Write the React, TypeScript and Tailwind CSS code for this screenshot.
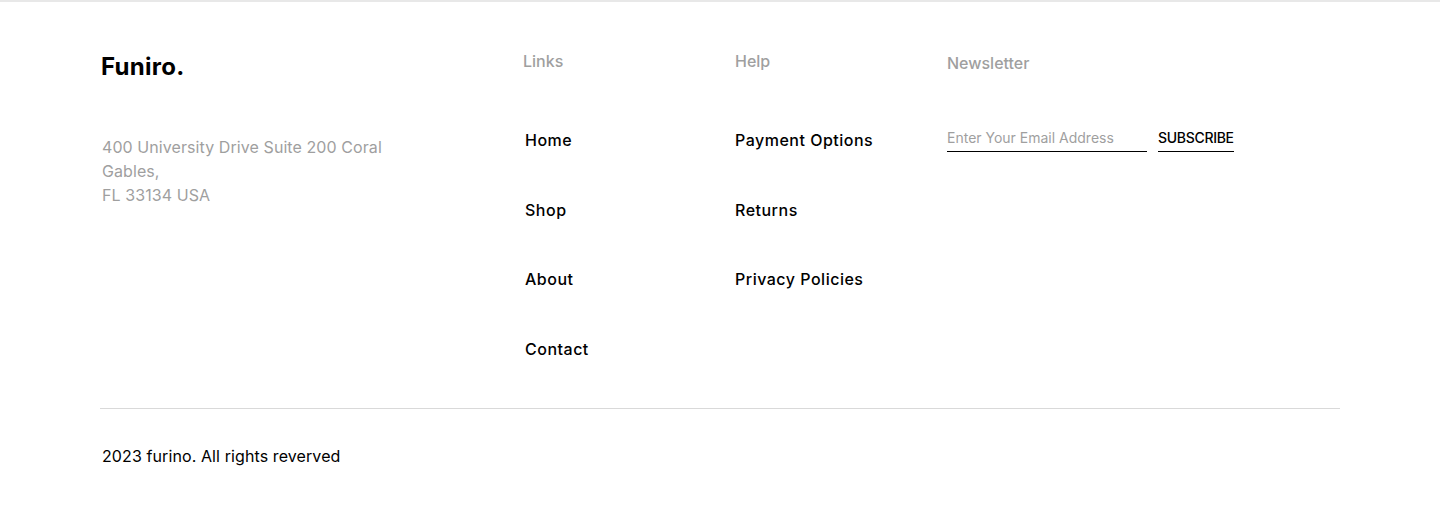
export default function App() {
  const links = ["Home", "Shop", "About", "Contact"];
  const help = ["Payment Options", "Returns", "Privacy Policies"];

  return (
    <footer
      className="w-full bg-white border-t-2 border-[#e8e8e8] text-black"
      style={{ fontFamily: "Inter, 'Open Sans', sans-serif" }}
    >
      <div className="px-[100px] pt-[47px]">
        <div className="flex">
          <div className="w-[423px] shrink-0">
            <h2 className="text-2xl leading-9 font-bold pl-[1px] tracking-[0.3px]">Funiro.</h2>
            <p className="mt-[50px] w-[290px] pl-[2px] text-base leading-6 text-[#9f9f9f] tracking-[0.08px]">
              400 University Drive Suite 200 Coral Gables,
              <br />
              FL 33134 USA
            </p>
          </div>

          <div className="w-[212px] shrink-0">
            <h3 className="text-base leading-6 font-medium text-[#9f9f9f]">Links</h3>
            <ul className="mt-[55px] flex flex-col gap-[45.7px] pl-[2px]">
              {links.map((l) => (
                <li key={l} className="text-base leading-6 font-medium tracking-[0.5px]">
                  {l}
                </li>
              ))}
            </ul>
          </div>

          <div className="w-[212px] shrink-0">
            <h3 className="text-base leading-6 font-medium text-[#9f9f9f]">Help</h3>
            <ul className="mt-[55px] flex flex-col gap-[45.7px]">
              {help.map((l) => (
                <li key={l} className="text-base leading-6 font-medium tracking-[0.5px]">
                  {l}
                </li>
              ))}
            </ul>
          </div>

          <div className="flex-1">
            <h3 className="mt-[2px] text-base leading-6 font-medium text-[#9f9f9f]">Newsletter</h3>
            <div className="mt-[53px] flex items-end gap-[11px]">
              <input
                type="text"
                placeholder="Enter Your Email Address"
                className="w-[200px] border-b border-black pb-[3px] text-sm leading-5 outline-none placeholder:text-[#9f9f9f]"
              />
              <button className="border-b border-black pb-[3px] text-sm leading-5 font-medium tracking-[-0.3px]">
                SUBSCRIBE
              </button>
            </div>
          </div>
        </div>

        <div className="mt-[47px] border-t border-[#d9d9d9]" />
        <p className="pt-[35px] pl-[2px] pb-[38px] text-base leading-6 tracking-[0.1px]">
          2023 furino. All rights reverved
        </p>
      </div>
    </footer>
  );
}
